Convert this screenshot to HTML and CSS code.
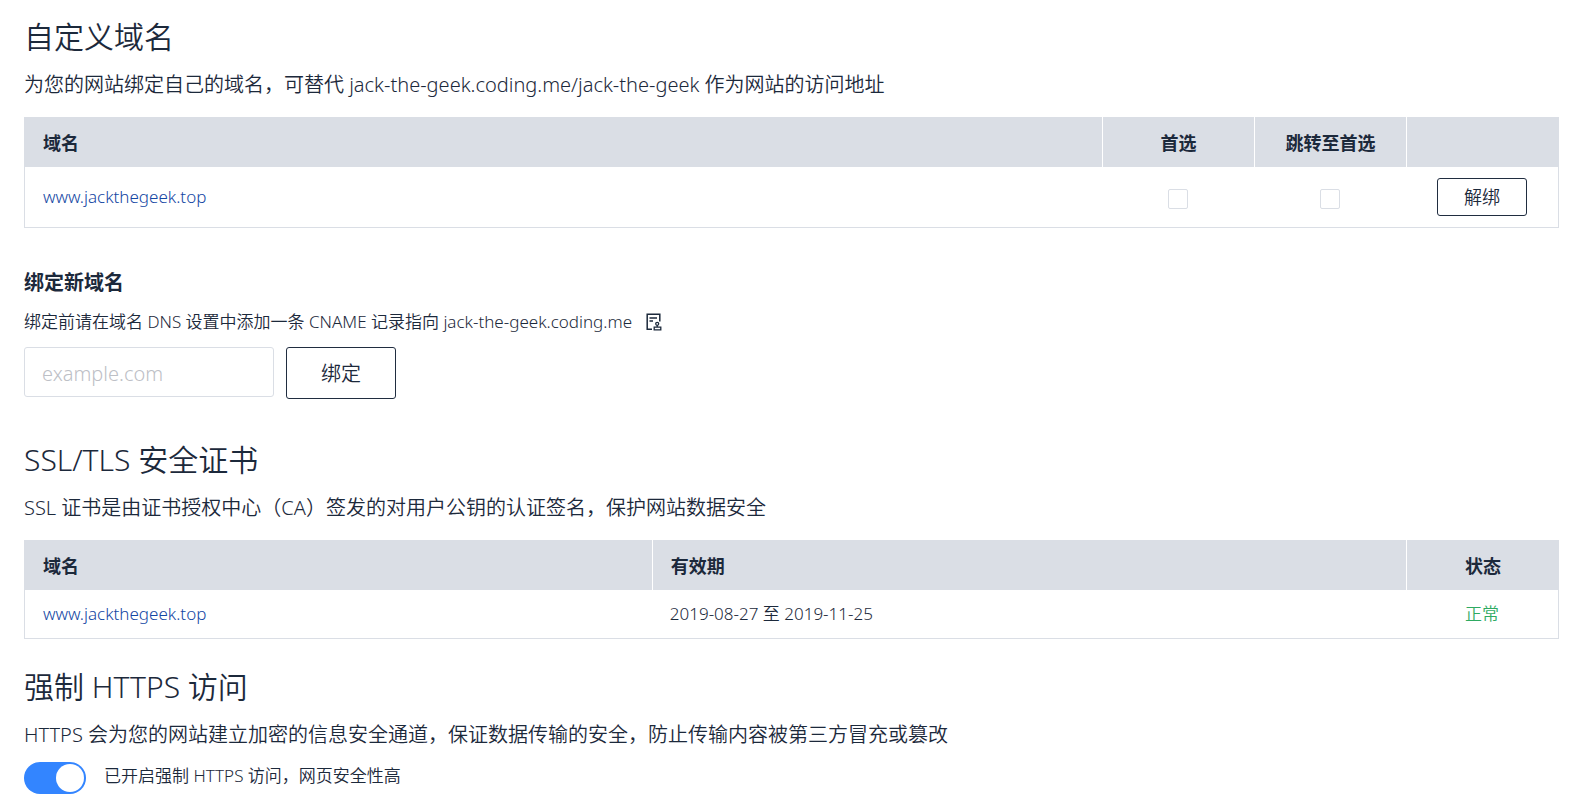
FILE: index.html
```html
<!DOCTYPE html>
<html lang="zh-CN">
<head>
<meta charset="utf-8">
<title>自定义域名</title>
<link rel="stylesheet" href="styles.css">
</head>
<body>
<main class="page">
  <section class="section">
    <h2 class="title">自定义域名</h2>
    <p class="desc">为您的网站绑定自己的域名，可替代 jack-the-geek.coding.me/jack-the-geek 作为网站的访问地址</p>
    <table class="table">
      <colgroup><col><col class="col-narrow"><col class="col-narrow"><col class="col-action"></colgroup>
      <thead>
        <tr><th>域名</th><th class="center">首选</th><th class="center">跳转至首选</th><th></th></tr>
      </thead>
      <tbody>
        <tr class="row-tall">
          <td><a class="link" href="#">www.jackthegeek.top</a></td>
          <td class="center"><input class="check" type="checkbox" aria-label="首选"></td>
          <td class="center"><input class="check" type="checkbox" aria-label="跳转至首选"></td>
          <td class="center"><button class="btn btn-small" type="button">解绑</button></td>
        </tr>
      </tbody>
    </table>
    <form class="bind">
      <h3 class="subtitle">绑定新域名</h3>
      <label class="hint" for="domain">
        <span>绑定前请在域名 DNS 设置中添加一条 CNAME 记录指向 jack-the-geek.coding.me</span>
        <svg class="hint-icon" viewBox="0 0 16 18" fill="none" stroke="currentColor" stroke-width="1.5" aria-hidden="true">
          <path d="M6 16.2H1.2V1.2H13.8V8.5"/>
          <path d="M3.5 5H11M3.5 8H7"/>
          <circle cx="11.2" cy="10.8" r="1.5" stroke-width="1.3"/>
          <path d="M11.2 12.3V14M8.2 16.8V14.2H14.8V16.8Z" stroke-width="1.3"/>
        </svg>
      </label>
      <div class="bind-row">
        <input class="field" id="domain" type="text" placeholder="example.com">
        <button class="btn btn-large" type="button">绑定</button>
      </div>
    </form>
  </section>

  <section class="section">
    <h2 class="title">SSL/TLS 安全证书</h2>
    <p class="desc">SSL 证书是由证书授权中心（CA）签发的对用户公钥的认证签名，保护网站数据安全</p>
    <table class="table">
      <colgroup><col class="col-domain"><col><col class="col-action"></colgroup>
      <thead>
        <tr><th>域名</th><th>有效期</th><th class="center">状态</th></tr>
      </thead>
      <tbody>
        <tr>
          <td><a class="link" href="#">www.jackthegeek.top</a></td>
          <td>2019-08-27 至 2019-11-25</td>
          <td class="center ok">正常</td>
        </tr>
      </tbody>
    </table>
  </section>

  <section class="section">
    <h2 class="title">强制 HTTPS 访问</h2>
    <p class="desc">HTTPS 会为您的网站建立加密的信息安全通道，保证数据传输的安全，防止传输内容被第三方冒充或篡改</p>
    <div class="switch-row">
      <input class="switch" id="https" type="checkbox" role="switch" checked>
      <label class="switch-label" for="https">已开启强制 HTTPS 访问，网页安全性高</label>
    </div>
  </section>
</main>
</body>
</html>
```
FILE: styles.css
```css
* { box-sizing: border-box; }

body {
  margin: 0;
  background: #fff;
  color: #1c293b;
  font-family: "Noto Sans", "Noto Sans CJK SC", sans-serif;
  font-size: 17px;
  font-weight: 350;
  line-height: 24px;
}

.page { padding: 17px 18px 8px 24px; }

.title {
  margin: 0 0 12px;
  font-size: 30px;
  font-weight: 350;
  line-height: 40px;
}

.desc {
  margin: 0 0 17px;
  font-size: 20px;
  line-height: 31px;
}

.table {
  width: 100%;
  table-layout: fixed;
  border-collapse: separate;
  border-spacing: 0;
}

.col-narrow { width: 152px; }
.col-action { width: 153px; }
.col-domain { width: 40.9%; }

.table th {
  height: 50px;
  padding: 2px 18px 0;
  background: #dadee5;
  font-size: 18px;
  font-weight: 700;
  text-align: left;
}

.table th + th { border-left: 1px solid #fff; }
.table th:first-child { padding-left: 19px; }

.table td {
  height: 49px;
  padding: 0 18px;
  border-bottom: 1px solid #dadee5;
}

.table td:first-child { border-left: 1px solid #dadee5; }
.table td:last-child { border-right: 1px solid #dadee5; }
.table .row-tall td { height: 61px; }
.table .center { padding-left: 0; padding-right: 0; text-align: center; }
.table .ok { color: #2eaa62; }

.link { color: #1346a3; text-decoration: none; }

.check {
  appearance: none;
  display: block;
  width: 20px;
  height: 20px;
  margin: 3px auto 0;
  border: 1px solid #dadee5;
  border-radius: 2px;
  background: #fff;
}

.check:checked { background: #3385ff; }

.btn {
  border: 1px solid #202d40;
  border-radius: 3px;
  background: #fff;
  color: inherit;
  font: inherit;
}

.btn-small { width: 90px; height: 38px; font-size: 18px; }
.btn-large { width: 110px; height: 52px; padding-top: 3px; font-size: 20px; }

.bind { margin: 40px 0 41px; }

.subtitle {
  margin: 0 0 12px;
  font-size: 20px;
  font-weight: 700;
  line-height: 30px;
}

.hint {
  display: flex;
  align-items: center;
  gap: 14px;
  margin-bottom: 13px;
}

.hint-icon { width: 16px; height: 18px; }

.bind-row { display: flex; align-items: flex-start; gap: 12px; }

.field {
  width: 250px;
  height: 50px;
  padding: 3px 17px 0;
  border: 1px solid #dadee5;
  border-radius: 3px;
  color: inherit;
  font: inherit;
  font-size: 20px;
}

.field::placeholder { color: #bdc0c6; }

.section + .section .table { margin-bottom: 28px; }

.section:last-child .desc { margin-bottom: 12px; }

.switch-row { display: flex; align-items: center; gap: 18px; }

.switch-label { padding-bottom: 4px; }

.switch {
  appearance: none;
  display: flex;
  width: 62px;
  height: 32px;
  margin: 0;
  padding: 2px;
  border-radius: 16px;
  background: #c5c8cd;
}

.switch::before {
  content: "";
  width: 28px;
  height: 28px;
  border-radius: 50%;
  background: #fff;
}

.switch:checked { justify-content: flex-end; background: #3385ff; }
```
